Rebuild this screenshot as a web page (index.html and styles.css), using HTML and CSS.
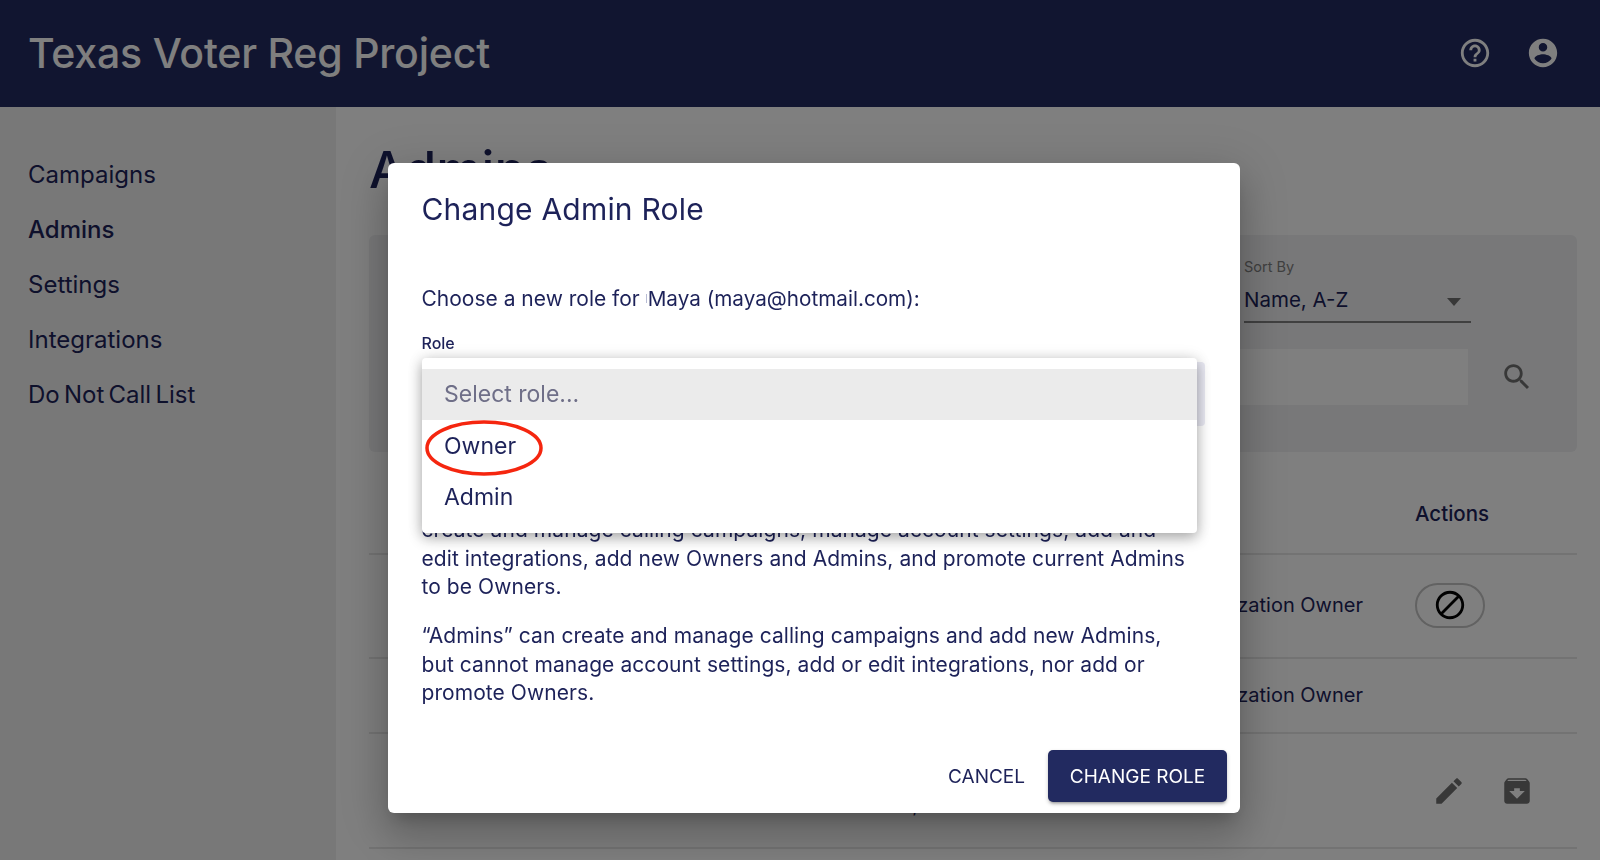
FILE: index.html
```html
<!DOCTYPE html>
<html lang="en">

<head>
    <meta charset="UTF-8" />
    <title>Texas Voter Reg Project</title>
    <link rel="stylesheet" href="styles.css">
</head>

<body>
    <header class="topbar">
        <div class="brand">Texas Voter Reg Project</div>
        <div class="topbar-icons">
            <svg class="icon" viewBox="0 0 24 24"><path d="M11 18h2v-2h-2v2zm1-16C6.48 2 2 6.48 2 12s4.48 10 10 10 10-4.48 10-10S17.52 2 12 2zm0 18c-4.41 0-8-3.59-8-8s3.59-8 8-8 8 3.59 8 8-3.59 8-8 8zm0-14c-2.21 0-4 1.79-4 4h2c0-1.1.9-2 2-2s2 .9 2 2c0 2-3 1.75-3 5h2c0-2.25 3-2.5 3-5 0-2.21-1.79-4-4-4z"/></svg>
            <svg class="icon" viewBox="0 0 24 24"><path d="M12 2C6.48 2 2 6.48 2 12s4.48 10 10 10 10-4.48 10-10S17.52 2 12 2zm0 3c1.66 0 3 1.34 3 3s-1.34 3-3 3-3-1.34-3-3 1.34-3 3-3zm0 14.2c-2.5 0-4.71-1.28-6-3.22.03-1.99 4-3.08 6-3.08 1.99 0 5.97 1.09 6 3.08-1.29 1.94-3.5 3.22-6 3.22z"/></svg>
        </div>
    </header>

    <div class="layout">
        <nav class="sidebar">
            <a>Campaigns</a>
            <a class="active">Admins</a>
            <a>Settings</a>
            <a>Integrations</a>
            <a>Do Not Call List</a>
        </nav>

        <main class="content">
            <h1>Admins</h1>

            <section class="filters">
                <div class="sort-field">
                    <div class="sort-label">Sort By</div>
                    <div class="sort-value">
                        <span>Name, A-Z</span>
                        <span class="caret"></span>
                    </div>
                </div>
                <div class="search-row">
                    <div class="search-input"></div>
                    <svg class="icon" viewBox="0 0 24 24"><path d="M15.5 14h-.79l-.28-.27C15.41 12.59 16 11.11 16 9.5 16 5.91 13.09 3 9.5 3S3 5.91 3 9.5 5.91 16 9.5 16c1.61 0 3.09-.59 4.23-1.57l.27.28v.79l5 4.99L20.49 19l-4.99-5zm-6 0C7.01 14 5 11.99 5 9.5S7.01 5 9.5 5 14 7.01 14 9.5 11.99 14 9.5 14z"/></svg>
                </div>
            </section>

            <div class="table">
                <div class="row row-head">
                    <div></div>
                    <div class="actions-title">Actions</div>
                </div>
                <div class="row row-first">
                    <div class="role">Organization Owner</div>
                    <div class="actions">
                        <span class="pill">
                            <svg class="icon" viewBox="0 0 24 24"><path d="M12 2C6.48 2 2 6.48 2 12s4.48 10 10 10 10-4.48 10-10S17.52 2 12 2zM4 12c0-4.42 3.58-8 8-8 1.85 0 3.55.63 4.9 1.69L5.69 16.9C4.63 15.55 4 13.85 4 12zm8 8c-1.85 0-3.55-.63-4.9-1.69L18.31 7.1C19.37 8.45 20 10.15 20 12c0 4.42-3.58 8-8 8z"/></svg>
                        </span>
                    </div>
                </div>
                <div class="row row-second">
                    <div class="role">Organization Owner</div>
                    <div class="actions"></div>
                </div>
                <div class="row row-third">
                    <div class="role role-tail">,</div>
                    <div class="actions">
                        <svg class="icon" viewBox="0 0 24 24"><path d="M3 17.25V21h3.75L17.81 9.94l-3.75-3.75L3 17.25zM20.71 7.04c.39-.39.39-1.02 0-1.41l-2.34-2.34c-.39-.39-1.02-.39-1.41 0l-1.83 1.83 3.75 3.75 1.83-1.83z"/></svg>
                        <svg class="icon" viewBox="0 0 24 24"><path d="M20.54 5.23l-1.39-1.68C18.88 3.21 18.47 3 18 3H6c-.47 0-.88.21-1.16.55L3.46 5.23C3.17 5.57 3 6.02 3 6.5V19c0 1.1.9 2 2 2h14c1.1 0 2-.9 2-2V6.5c0-.48-.17-.93-.46-1.27zM12 17.5L6.5 12H10v-2h4v2h3.5L12 17.5zM5.12 5l.81-1h12l.94 1H5.12z"/></svg>
                    </div>
                </div>
            </div>
        </main>
    </div>

    <div class="scrim"></div>

    <div class="dialog">
        <h2>Change Admin Role</h2>
        <p class="choose">Choose a new role for <span class="who">Maya (maya@hotmail.com):</span></p>
        <div class="field-label">Role</div>
        <div class="select-box"></div>

        <p class="copy first">create and manage calling campaigns, manage account settings, add and<br>
            edit integrations, add new Owners and Admins, and promote current Admins<br>
            to be Owners.</p>
        <p class="copy">“Admins” can create and manage calling campaigns and add new Admins,<br>
            but cannot manage account settings, add or edit integrations, nor add or<br>
            promote Owners.</p>

        <div class="dialog-actions">
            <button class="btn-text">CANCEL</button>
            <button class="btn-main">CHANGE ROLE</button>
        </div>

        <div class="menu">
            <div class="menu-item placeholder">Select role...</div>
            <div class="menu-item">Owner</div>
            <div class="menu-item">Admin</div>
        </div>

        <svg class="circle-mark" viewBox="0 0 118 56"><ellipse cx="59" cy="28" rx="57" ry="26"/></svg>
    </div>
</body>

</html>
```

FILE: styles.css
```css
* {
    box-sizing: border-box;
}

body {
    margin: 0;
    height: 860px;
    overflow: hidden;
    background-color: #ffffff;
    color: #1d2259;
    font-family: Inter, 'Noto Sans', sans-serif;
}

.icon {
    width: 34px;
    height: 34px;
    flex: none;
    fill: currentColor;
}

/* top bar */
.topbar {
    height: 107px;
    background-color: #222a60;
    color: #ffffff;
    display: flex;
    align-items: center;
    justify-content: space-between;
    padding: 0 40px 0 28px;
}

.brand {
    font-size: 41px;
    font-weight: 500;
    letter-spacing: -0.2px;
    margin-top: -2px;
}

.topbar-icons {
    display: flex;
    gap: 34px;
    margin-top: -2px;
}

/* page under the dialog */
.layout {
    display: flex;
    height: 753px;
}

.sidebar {
    width: 336px;
    flex: none;
    background-color: #f0f0f1;
    padding-top: 40px;
    display: flex;
    flex-direction: column;
    padding-left: 28px;
}

.sidebar a {
    height: 55px;
    line-height: 55px;
    font-size: 24px;
    word-spacing: -2.5px;
}

.sidebar a.active {
    font-weight: 500;
}

.content {
    flex: 1;
    padding: 23px 23px 0 33px;
}

h1 {
    margin: 0 0 25px;
    height: 80px;
    line-height: 80px;
    font-size: 51px;
    font-weight: 500;
}

.filters {
    height: 217px;
    background-color: #f0f1f3;
    border-radius: 6px;
    padding: 20px 43px 0 0;
    display: flex;
    flex-direction: column;
    align-items: flex-end;
}

.sort-field {
    width: 227px;
    margin-right: 63px;
    border-bottom: 2px solid #808080;
    height: 68px;
}

.sort-label {
    font-size: 14.5px;
    line-height: 24px;
    color: #808080;
}

.sort-value {
    display: flex;
    justify-content: space-between;
    align-items: center;
    font-size: 20.5px;
    line-height: 34px;
    padding: 4px 10px 0 0;
}

.caret {
    width: 0;
    height: 0;
    border-left: 7px solid transparent;
    border-right: 7px solid transparent;
    border-top: 8px solid #707070;
    margin-top: 4px;
}

.search-row {
    display: flex;
    align-items: center;
    gap: 32px;
    margin-top: 26px;
    color: #707070;
}

.search-input {
    width: 700px;
    height: 56px;
    background-color: #ffffff;
}

.row {
    display: grid;
    grid-template-columns: 1fr 162px;
    column-gap: 52px;
    align-items: center;
    border-bottom: 2px solid #e6e6e6;
}

.row-head {
    height: 103px;
    padding-top: 22px;
}

.row-first {
    height: 104px;
    padding-bottom: 2px;
}

.row-second {
    height: 75px;
    padding-bottom: 2px;
}

.row-third {
    height: 115px;
}

.actions-title {
    font-size: 20.5px;
    font-weight: 500;
}

.role {
    font-size: 20px;
    text-align: right;
}

/* only the tail of this cell shows below the dialog */
.role-tail {
    padding: 28px 445px 0 0;
}

.actions {
    display: flex;
    align-items: center;
    color: #707070;
}

.row-third .actions {
    gap: 34px;
    padding-left: 17px;
}

.pill {
    width: 70px;
    height: 45px;
    border: 2px solid #c4c4c4;
    border-radius: 23px;
    display: flex;
    align-items: center;
    justify-content: center;
    color: #000000;
}

.scrim {
    position: fixed;
    inset: 0;
    background-color: rgba(0, 0, 0, 0.5);
}

/* dialog */
.dialog {
    position: absolute;
    left: 388px;
    top: 163px;
    width: 852px;
    height: 650px;
    padding: 24px 35px 11px 33.5px;
    background-color: #ffffff;
    border-radius: 6px;
    display: flex;
    flex-direction: column;
    box-shadow: 0 11px 15px -7px rgba(0, 0, 0, 0.2), 0 24px 38px 3px rgba(0, 0, 0, 0.14), 0 9px 46px 8px rgba(0, 0, 0, 0.12);
}

h2 {
    margin: 0;
    font-size: 30px;
    line-height: 44px;
    font-weight: 400;
    letter-spacing: 0.2px;
}

.choose {
    margin: 53px 0 0;
    font-size: 21px;
    line-height: 30px;
}

.who {
    font-size: 20.7px;
}

.who::before {
    content: "";
    display: inline-block;
    width: 1px;
    height: 9px;
    margin-right: 1px;
    background-color: #b8bcd4;
    vertical-align: 3px;
}

.field-label {
    margin-top: 19px;
    font-size: 16px;
    line-height: 20px;
    font-weight: 500;
}

.select-box {
    margin-top: 9px;
    height: 64px;
    background-color: #e9e9f3;
    border-radius: 4px;
    flex: none;
}

.copy {
    margin: 20.5px 0 0;
    font-size: 21px;
    line-height: 28.5px;
    letter-spacing: 0.07px;
    white-space: nowrap;
}

.copy.first {
    margin-top: 90px;
}

.dialog-actions {
    margin-top: auto;
    margin-right: -22px;
    display: flex;
    justify-content: flex-end;
    align-items: center;
    gap: 23px;
}

.dialog-actions button {
    font-family: inherit;
    font-size: 19px;
    border: none;
    border-radius: 5px;
}

.btn-text {
    background: none;
    color: #1d2259;
    padding: 0;
}

.btn-main {
    width: 179px;
    height: 52px;
    background-color: #222a60;
    color: #ffffff;
    box-shadow: 0 3px 3px -2px rgba(0, 0, 0, 0.3), 0 2px 4px rgba(0, 0, 0, 0.2);
}

.menu {
    position: absolute;
    left: 34px;
    top: 195px;
    width: 775px;
    height: 175px;
    padding-top: 11px;
    background-color: #ffffff;
    border-radius: 4px;
    box-shadow: 0 5px 14px rgba(0, 0, 0, 0.3), 0 0 16px rgba(0, 0, 0, 0.1);
}

.menu-item {
    height: 51px;
    line-height: 53px;
    padding-left: 22px;
    font-size: 23px;
}

.menu-item.placeholder {
    line-height: 51px;
    background-color: #ebebeb;
    color: #6f6f88;
}

.circle-mark {
    position: absolute;
    left: 37px;
    top: 257px;
    width: 118px;
    height: 56px;
    fill: none;
    stroke: #f5260f;
    stroke-width: 3.5;
}
```
